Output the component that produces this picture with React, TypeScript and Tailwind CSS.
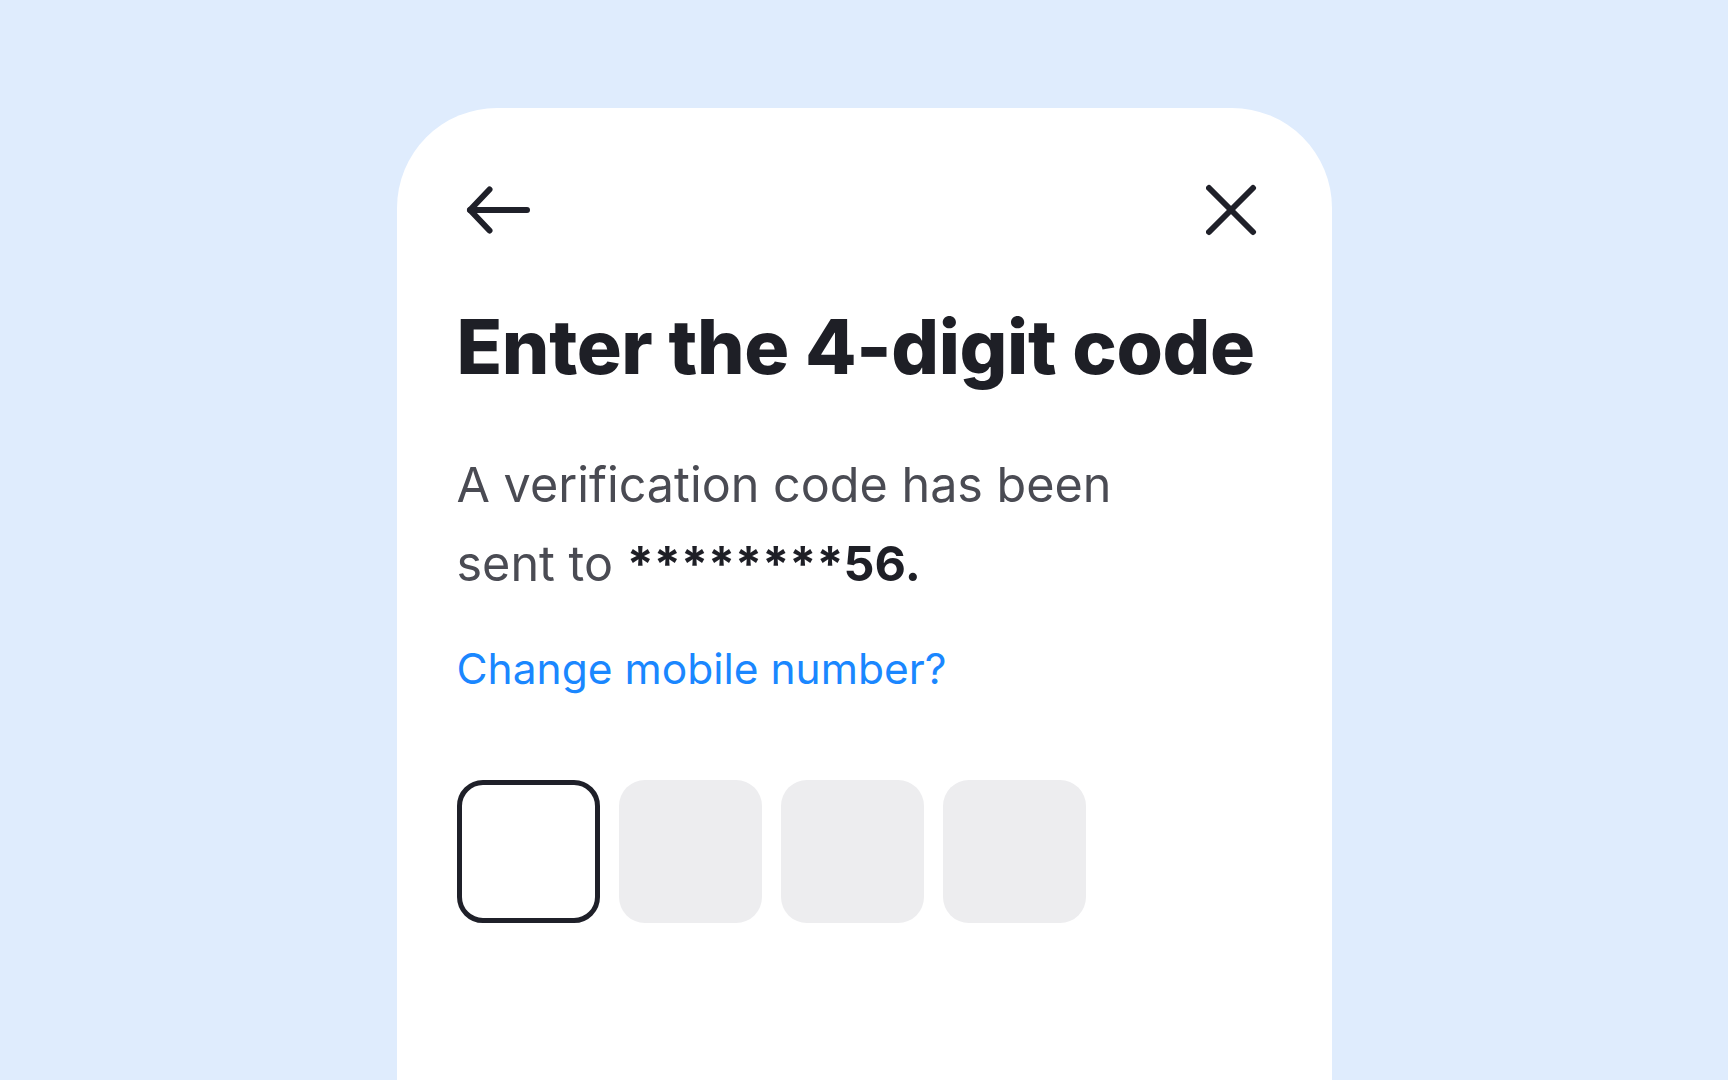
import React from "react";

const BackIcon = () => (
  <svg width="80" height="64" viewBox="0 0 80 64" fill="none" stroke="#1f2029" strokeWidth="6" strokeLinecap="round" strokeLinejoin="round">
    <path d="M13 32H70" />
    <path d="M32.5 11.5L13 32L32.5 52.5" />
  </svg>
);

const CloseIcon = () => (
  <svg width="64" height="64" viewBox="0 0 64 64" fill="none" stroke="#1f2029" strokeWidth="6" strokeLinecap="round">
    <path d="M3 10L47 54" />
    <path d="M47 10L3 54" />
  </svg>
);

const App: React.FC = () => {
  return (
    <div className="h-screen w-full overflow-hidden bg-[#dfecfd] flex justify-center pt-[108px]" style={{ fontFamily: "Inter, 'Noto Sans', sans-serif" }}>
      <div className="w-[935px] h-[1100px] shrink-0 bg-white rounded-[100px] pl-[60px] pr-[62px] pt-[70px]">
        <div className="flex items-center justify-between h-16">
          <BackIcon />
          <CloseIcon />
        </div>

        <h1 className="mt-[67px] text-[75px] leading-none font-extrabold tracking-[-0.005em] text-[#1e1f26]">
          Enter the 4-digit code
        </h1>

        <p className="mt-[61px] text-[48.5px] leading-[79px] text-[#4a4b53] max-w-[680px]">
          A verification code has been sent to{" "}
          <span className="font-bold text-[#1e1f26]">********56.</span>
        </p>

        <a href="#" className="block mt-[40px] text-[42.5px] leading-[1.2] text-[#1a87ff]">
          Change mobile number?
        </a>

        <div className="mt-[86px] flex gap-[19px]">
          <div className="w-[143px] h-[143px] rounded-[26px] border-[5px] border-[#1f2029] bg-white" />
          <div className="w-[143px] h-[143px] rounded-[26px] bg-[#ededef]" />
          <div className="w-[143px] h-[143px] rounded-[26px] bg-[#ededef]" />
          <div className="w-[143px] h-[143px] rounded-[26px] bg-[#ededef]" />
        </div>
      </div>
    </div>
  );
};

export default App;
